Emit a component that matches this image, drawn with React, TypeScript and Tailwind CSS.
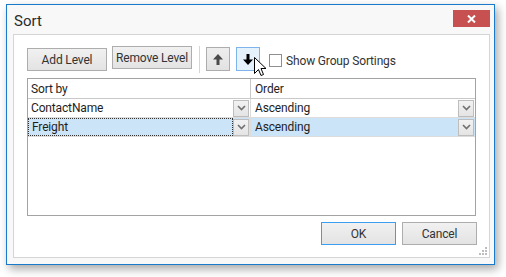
import React from 'react';

function Chevron() {
  return (
    <svg width="9" height="6" viewBox="0 0 9 6">
      <path d="M1 1 L4.5 4.5 L8 1" fill="none" stroke="#707070" strokeWidth="1.6" />
    </svg>
  );
}

function ComboButton() {
  return (
    <div className="w-[16px] h-[17px] border border-[#bdbdbd] bg-gradient-to-b from-[#f2f2f2] to-[#e4e4e4] flex items-center justify-center">
      <Chevron />
    </div>
  );
}

function Arrow({ down, color }: { down?: boolean; color: string }) {
  return (
    <svg width="10" height="11" viewBox="0 0 10 11" className={down ? 'rotate-180' : ''}>
      <path d="M5 0 L10 5.5 L6.5 5.5 L6.5 11 L3.5 11 L3.5 5.5 L0 5.5 Z" fill={color} />
    </svg>
  );
}

function Row({ field, selected }: { field: string; selected?: boolean }) {
  const bg = selected ? 'bg-[#cce4f7]' : 'bg-white';
  return (
    <div className="flex h-[19px] border-b border-[#dcdcdc]">
      <div className={`w-[223px] flex items-center justify-between border-r border-[#dcdcdc] ${bg}`}>
        <div
          className={`h-full flex-1 flex items-center pl-[3px] ${
            selected ? 'border border-dotted border-[#333]' : ''
          }`}
        >
          {field}
        </div>
        <div className="pr-px">
          <ComboButton />
        </div>
      </div>
      <div className={`flex-1 flex items-center justify-between pl-[4px] ${bg}`}>
        <span>Ascending</span>
        <div className="pr-px">
          <ComboButton />
        </div>
      </div>
    </div>
  );
}

export default function App() {
  return (
    <div className="w-[506px] h-[277px] bg-white pt-[4px] pl-[6px] font-['Roboto',sans-serif] text-[12px] tracking-[-0.15px] text-[#1e1e1e] relative overflow-hidden">
      <div className="w-[489px] h-[261px] border border-[#1979ca] bg-[#f8f8f8] shadow-[3px_4px_9px_rgba(0,0,0,0.35)] flex flex-col">
        {/* title bar */}
        <div className="h-[29px] flex justify-between">
          <div className="pl-[7px] pt-[5px] text-[15px] tracking-normal text-[#2b2b2b]">Sort</div>
          <div className="mt-[5px] mr-[4px] w-[37px] h-[17px] bg-[#c75050] flex items-center justify-center">
            <svg width="9" height="8" viewBox="0 0 9 8">
              <path d="M1 0.5 L8 7.5 M8 0.5 L1 7.5" stroke="white" strokeWidth="2" />
            </svg>
          </div>
        </div>

        {/* content panel */}
        <div className="ml-[6px] mr-[4px] h-[224px] border border-[#d5d5d5] bg-white relative flex flex-col">
          <div className="flex items-start mt-[11px] ml-[13px] h-[28px]">
            <button className="mt-[2px] w-[80px] h-[23px] border border-[#adadad] bg-gradient-to-b from-[#f1f1f1] to-[#e3e3e3] text-[#333]">
              Add Level
            </button>
            <button className="ml-[5px] w-[80px] h-[23px] border border-[#adadad] bg-gradient-to-b from-[#f1f1f1] to-[#e3e3e3] text-[#333]">
              Remove Level
            </button>
            <div className="ml-[7px] w-px h-[27px] bg-[#d5d5d5]" />
            <button className="ml-[6px] mt-px w-[24px] h-[24px] border border-[#adadad] bg-gradient-to-b from-[#eeeeee] to-[#e2e2e2] flex items-center justify-center">
              <Arrow color="#4a4a4a" />
            </button>
            <button className="ml-[6px] mt-px w-[24px] h-[24px] border border-[#7eb4ea] bg-[#e5f1fb] flex items-center justify-center">
              <Arrow down color="#000" />
            </button>
            <div className="ml-[9px] mt-[8px] w-[13px] h-[13px] border border-[#8f8f8f] bg-white" />
            <span className="ml-[4px] mt-[6px] text-[#333]">Show Group Sortings</span>
          </div>

          {/* grid */}
          <div className="ml-[13px] mt-[4px] w-[449px] h-[138px] border border-[#a3a3a3] bg-white flex flex-col">
            <div className="flex h-[20px] border-b border-[#c8c8c8]">
              <div className="w-[223px] pl-[3px] flex items-center border-r border-[#c8c8c8]">Sort by</div>
              <div className="flex-1 pl-[4px] flex items-center">Order</div>
            </div>
            <Row field="ContactName" />
            <Row field="Freight" selected />
          </div>

          {/* dialog buttons */}
          <div className="flex justify-end gap-[6px] mt-[6px] mr-[12px]">
            <button className="w-[75px] h-[23px] border border-[#3c9ef0] bg-gradient-to-b from-[#f1f1f1] to-[#e3e3e3] text-[#333]">
              OK
            </button>
            <button className="w-[75px] h-[23px] border border-[#adadad] bg-gradient-to-b from-[#f1f1f1] to-[#e3e3e3] text-[#333]">
              Cancel
            </button>
          </div>

          {/* size grip */}
          <svg className="absolute right-[1px] bottom-[1px]" width="9" height="9" viewBox="0 0 9 9">
            <rect x="6" y="0" width="2" height="2" fill="#bdbdbd" />
            <rect x="3" y="3" width="2" height="2" fill="#bdbdbd" />
            <rect x="6" y="3" width="2" height="2" fill="#bdbdbd" />
            <rect x="0" y="6" width="2" height="2" fill="#bdbdbd" />
            <rect x="3" y="6" width="2" height="2" fill="#bdbdbd" />
            <rect x="6" y="6" width="2" height="2" fill="#bdbdbd" />
          </svg>
        </div>
      </div>

      {/* mouse pointer over the down button */}
      <svg className="absolute left-[254px] top-[57px]" width="13" height="20" viewBox="0 0 13 20">
        <path
          d="M0.5 0.5 L0.5 16.5 L4.5 12.5 L7 18.5 L9.5 17.5 L7 11.5 L12 11.5 Z"
          fill="white"
          stroke="black"
          strokeWidth="1"
          strokeLinejoin="round"
        />
      </svg>
    </div>
  );
}
